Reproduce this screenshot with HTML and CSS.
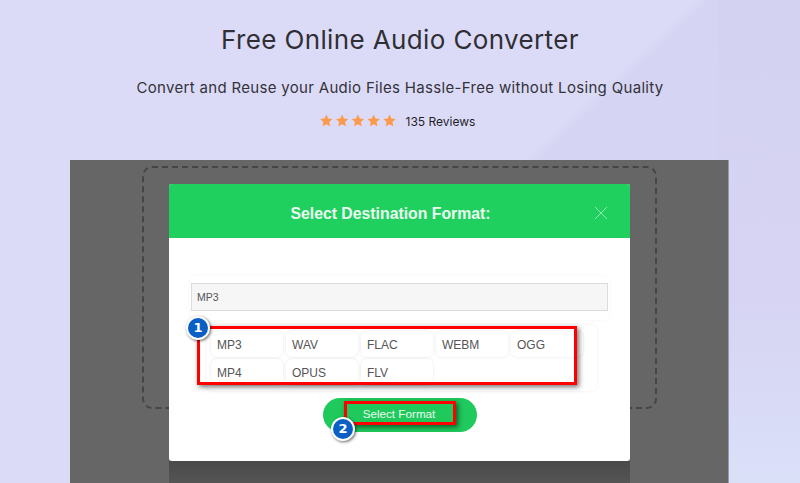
FILE: index.html
```html
<!DOCTYPE html>
<html lang="en">
<head>
<meta charset="utf-8">
<title>Free Online Audio Converter</title>
<link rel="stylesheet" href="styles.css">
</head>
<body>
<div class="page">
  <header class="hero">
    <h1 class="title">Free Online Audio Converter</h1>
    <p class="subtitle">Convert and Reuse your Audio Files Hassle-Free without Losing Quality</p>
    <div class="rating">
      <svg class="stars" width="76" height="13.7" viewBox="0 0 78 14">
        <defs><path id="star" d="M6.5 0.6 8.4 4.7 12.8 5.2 9.5 8.2 10.4 12.6 6.5 10.4 2.6 12.6 3.5 8.2 0.2 5.2 4.6 4.7Z"/></defs>
        <use href="#star" x="0"/><use href="#star" x="16.2"/><use href="#star" x="32.4"/><use href="#star" x="48.6"/><use href="#star" x="64.8"/>
      </svg>
      <span class="reviews">135 Reviews</span>
    </div>
  </header>
  <main class="panel">
    <div class="dropzone"></div>
  </main>
  <section class="modal">
    <div class="modal-head">
      <h2 class="modal-title">Select Destination Format:</h2>
      <svg class="close" width="14" height="14" viewBox="0 0 14 14"><path d="M1 1 13 13M13 1 1 13"/></svg>
    </div>
    <div class="modal-body">
      <div class="field-wrap"><div class="field">MP3</div></div>
      <div class="formats">
        <div class="fmt">MP3</div><div class="fmt">WAV</div><div class="fmt">FLAC</div><div class="fmt">WEBM</div><div class="fmt">OGG</div>
        <div class="fmt">MP4</div><div class="fmt">OPUS</div><div class="fmt">FLV</div>
      </div>
      <button class="select-btn">Select Format</button>
    </div>
  </section>
  <div class="mark mark-list"></div>
  <div class="mark mark-btn"></div>
  <div class="badge badge-one">1</div>
  <div class="badge badge-two">2</div>
</div>
</body>
</html>
```
FILE: styles.css
```css
* { box-sizing: border-box; }
html, body { margin: 0; padding: 0; }
body { width: 800px; height: 483px; overflow: hidden; }
.page {
  position: relative;
  width: 800px;
  height: 483px;
  overflow: hidden;
  display: flex;
  flex-direction: column;
  background:
    linear-gradient(180deg, #d4d2f1 0, #d6d4f2 62%, #dbe0f9 100%) right top / 83px 100% no-repeat,
    linear-gradient(137deg, rgba(90,85,160,0) 78%, rgba(90,85,160,0.05) 80%) left top / 717px 160px no-repeat,
    #dcdbf7;
}
.hero { height: 160px; flex: none; display: flex; flex-direction: column; align-items: center; }
.title {
  margin: 24px 0 0;
  font: 400 26px/32px Inter, sans-serif;
  letter-spacing: 0.37px;
  color: #2f2f35;
}
.subtitle {
  margin: 22px 0 0;
  font: 400 15px/20px Inter, sans-serif;
  letter-spacing: 0.32px;
  color: #33333a;
}
.rating { margin-top: 16px; padding-right: 5px; display: flex; align-items: center; gap: 10px; }
.stars { fill: #fb9a4a; display: block; margin-top: -3px; }
.reviews { font: 400 12px/16px Inter, sans-serif; letter-spacing: 0; color: #1f1f2a; }
.panel {
  flex: 1;
  margin: 0 71px 0 70px;
  background: #666;
  border-right: 1px solid #9a9aa6;
  padding: 6px 71px 0 72px;
}
.dropzone {
  height: 243px;
  border: 2px dashed #454545;
  border-radius: 10px;
}
.modal {
  position: absolute;
  left: 169px;
  top: 184px;
  width: 461px;
  height: 277px;
  background: #fff;
  border-radius: 3px;
  display: flex;
  flex-direction: column;
}
.modal::after {
  content: "";
  position: absolute;
  left: 0;
  right: 0;
  top: 100%;
  height: 22px;
  background: linear-gradient(180deg, #4a4a4a, #555);
}
.modal-head {
  height: 54px;
  flex: none;
  background: #1fd05f;
  border-radius: 3px 3px 0 0;
  display: flex;
  align-items: center;
  justify-content: center;
  position: relative;
}
.modal-title { margin: 0; font: 700 15.8px/20px "Liberation Sans", Arial, sans-serif; color: #ecfbf1; position: relative; left: -9px; top: 3px; }
.close { position: absolute; right: 22px; top: 22px; }
.close path { stroke: #8fe6ae; stroke-width: 1; fill: none; }
.modal-body { flex: 1; display: flex; flex-direction: column; align-items: center; padding: 38px 0 0; }
.field-wrap {
  width: 419px;
  padding: 7px 1px 9px;
  border-radius: 6px;
  box-shadow: 0 0 4px rgba(0,0,0,0.04);
}
.field {
  height: 28px;
  background: #f6f6f6;
  border: 1px solid #dcdcdc;
  padding: 0 5px;
  font: 400 10.5px/27px "Liberation Sans", Arial, sans-serif;
  color: #555;
}
.formats {
  margin: 5px 0 0 5px;
  width: 390px;
  height: 66px;
  padding: 6px 0 0 4px;
  display: grid;
  grid-template-columns: repeat(5, 75px);
  grid-auto-rows: 28px;
  border-radius: 6px;
  box-shadow: 0 0 4px rgba(0,0,0,0.06);
  align-content: start;
}
.fmt {
  width: 72px;
  height: 26px;
  border-radius: 6px;
  box-shadow: 0 0 3px rgba(0,0,0,0.1);
  padding-left: 6px;
  font: 400 12px/28px "Liberation Sans", Arial, sans-serif;
  color: #555;
}
.select-btn {
  margin: 7px 0 0;
  width: 154px;
  height: 34px;
  border: none;
  border-radius: 17px;
  background: #1fc95c;
  color: #eafbf0;
  font: 400 11.7px/32px "Liberation Sans", Arial, sans-serif;
  padding: 0 1px 2px 0;
}
.mark { position: absolute; border: 3px solid #f00; box-shadow: 2px 2px 5px rgba(0,0,0,0.55); }
.mark-list { left: 197px; top: 326px; width: 380px; height: 59px; }
.mark-btn { left: 344px; top: 401px; width: 112px; height: 24px; }
.badge {
  position: absolute;
  width: 24px;
  height: 24px;
  border-radius: 50%;
  background: #0a5fc4;
  border: 2px solid #fff;
  box-shadow: 1px 1px 3px rgba(0,0,0,0.6);
  color: #fff;
  font: 700 13px/20px "DejaVu Sans", sans-serif;
  text-align: center;
}
.badge-one { left: 186px; top: 316px; }
.badge-two { left: 331px; top: 417px; }
```
